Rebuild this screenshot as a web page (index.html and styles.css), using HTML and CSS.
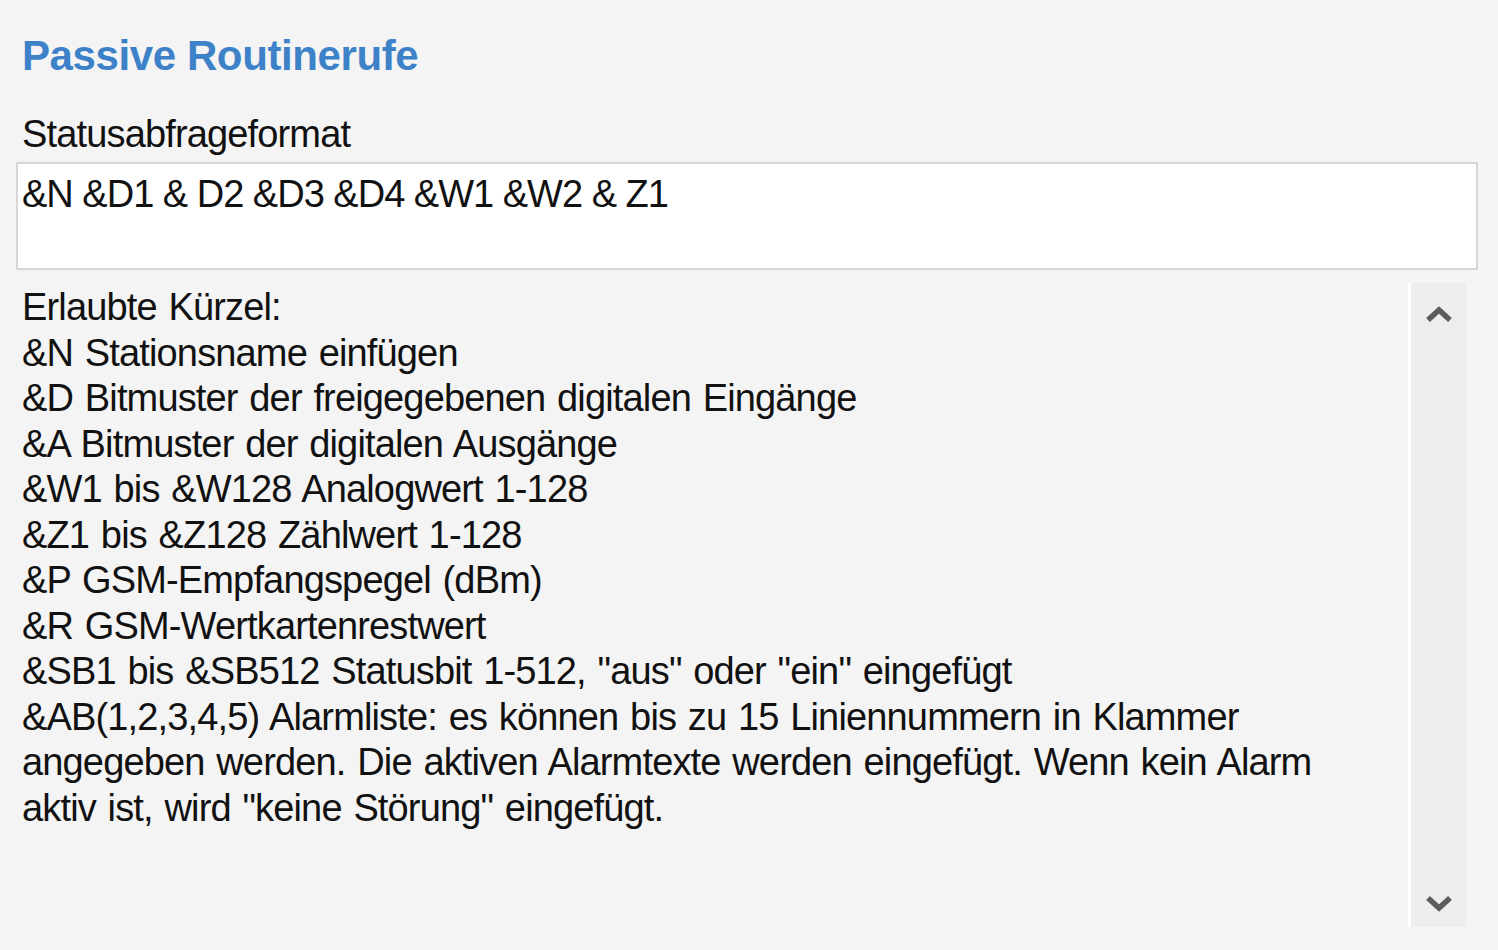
FILE: index.html
```html
<!DOCTYPE html>
<html lang="de">
<head>
    <meta charset="UTF-8">
    <title>Passive Routinerufe</title>
    <link rel="stylesheet" href="styles.css">
</head>
<body>
    <div class="panel">
        <h1 class="title">Passive Routinerufe</h1>

        <div class="field-label">Statusabfrageformat</div>
        <div class="format-box">&amp;N &amp;D1 &amp; D2 &amp;D3 &amp;D4 &amp;W1 &amp;W2 &amp; Z1</div>

        <div class="help-area">
            <div class="help-text">
                <div>Erlaubte Kürzel:</div>
                <div>&amp;N Stationsname einfügen</div>
                <div>&amp;D Bitmuster der freigegebenen digitalen Eingänge</div>
                <div>&amp;A Bitmuster der digitalen Ausgänge</div>
                <div>&amp;W1 bis &amp;W128 Analogwert 1-128</div>
                <div>&amp;Z1 bis &amp;Z128 Zählwert 1-128</div>
                <div>&amp;P GSM-Empfangspegel (dBm)</div>
                <div>&amp;R GSM-Wertkartenrestwert</div>
                <div>&amp;SB1 bis &amp;SB512 Statusbit 1-512, "aus" oder "ein" eingefügt</div>
                <div>&amp;AB(1,2,3,4,5) Alarmliste: es können bis zu 15 Liniennummern in Klammer<br>angegeben werden. Die aktiven Alarmtexte werden eingefügt. Wenn kein Alarm<br>aktiv ist, wird "keine Störung" eingefügt.</div>
            </div>
            <div class="scrollbar">
                <svg class="arrow" width="28" height="20" viewBox="0 0 28 20"><path d="M3 15 L14 5 L25 15" fill="none" stroke="#5c5c5c" stroke-width="5.5"/></svg>
                <svg class="arrow" width="28" height="20" viewBox="0 0 28 20"><path d="M3 5 L14 15 L25 5" fill="none" stroke="#5c5c5c" stroke-width="5.5"/></svg>
            </div>
        </div>
    </div>
</body>
</html>
```

FILE: styles.css
```css
body {
    margin: 0;
    background-color: #f4f4f4;
    font-family: "Liberation Sans", Arial, sans-serif;
    color: #111;
}

.panel {
    padding: 30px 20px 0 16px;
}

.title {
    margin: 0 0 30px 6px;
    font-size: 42px;
    font-weight: bold;
    color: #3d82c9;
    line-height: 52px;
    letter-spacing: -0.4px;
}

.field-label {
    margin-left: 6px;
    font-size: 38px;
    line-height: 44px;
    letter-spacing: -0.85px;
}

.format-box {
    margin-top: 6px;
    height: 108px;
    background-color: #fff;
    border: 2px solid #d6d6d6;
    padding: 6px 4px 0;
    box-sizing: border-box;
    font-size: 38px;
    line-height: 48px;
    letter-spacing: -1px;
}

.help-area {
    display: flex;
    margin-top: 13px;
    height: 644px;
}

.help-text {
    flex: 1;
    padding: 2px 6px 0;
    font-size: 38px;
    line-height: 45.5px;
    letter-spacing: -0.85px;
    word-spacing: 2px;
}

.scrollbar {
    width: 55px;
    margin-right: 12px;
    border-left: 3px solid #fff;
    background-color: #ededed;
    display: flex;
    flex-direction: column;
    justify-content: space-between;
    align-items: center;
    padding: 22px 0 14px;
}
```
